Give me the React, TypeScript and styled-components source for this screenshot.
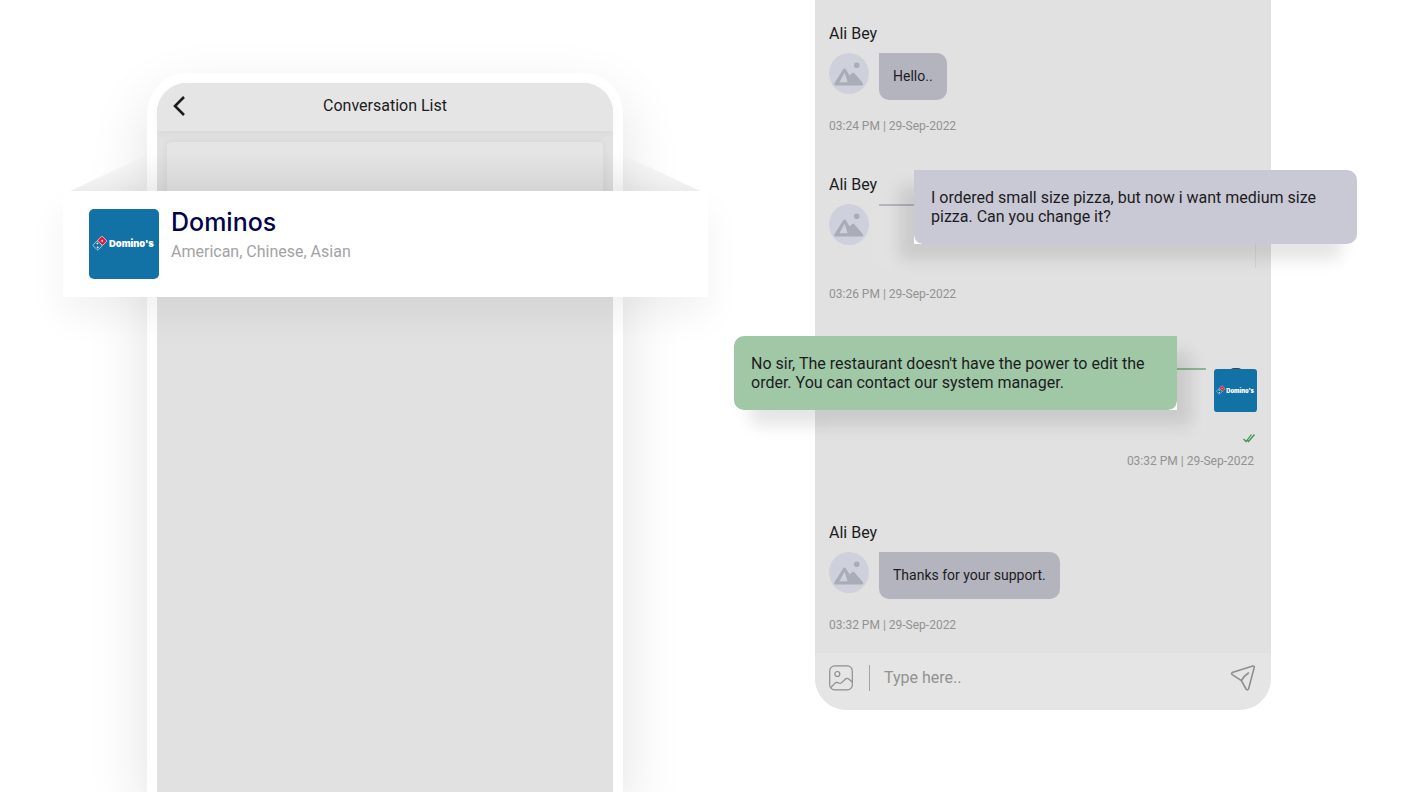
import React from "react";
import styled, { createGlobalStyle } from "styled-components";

const GlobalStyle = createGlobalStyle`
  *, *::before, *::after { box-sizing: border-box; }
  body {
    margin: 0;
    background: #fff;
    color: #1c1c1e;
    font-family: Roboto, "Liberation Sans", sans-serif;
    overflow-x: hidden;
  }
  button { padding: 0; border: 0; background: none; color: inherit; cursor: pointer; display: flex; }
  h1, h2, p { margin: 0; font-weight: 400; }
`;

const Page = styled.main`
  display: grid;
  grid-template-columns: 476fr 456fr;
  column-gap: 192px;
  min-height: 100vh;
  padding: 0 137px 0 147px;
  overflow: hidden;
`;

const PhoneFrame = styled.section`
  position: relative;
  display: flex;
  flex-direction: column;
  margin-top: 73px;
  padding: 10px 10px 0;
  background: #fff;
  border-radius: 40px 40px 0 0;
  box-shadow: 0 24px 60px rgba(0, 0, 0, 0.12);
`;

const Screen = styled.div`
  flex: 1;
  background: #e1e1e1;
  border-radius: 30px 30px 0 0;
`;

const ScreenHeader = styled.header`
  display: grid;
  grid-template-columns: 32px 1fr 32px;
  align-items: center;
  height: 48px;
  padding: 0 12px 2px;
  background: #e5e5e5;
  border-radius: 30px 30px 0 0;
  box-shadow: 0 2px 8px rgba(0, 0, 0, 0.04);
`;

const ScreenTitle = styled.h1`
  font-size: 16px;
  line-height: 20px;
  text-align: center;
`;

const List = styled.div`
  padding: 11px 10px;
`;

const ListSlot = styled.div`
  position: relative;
  height: 136px;
  background: #e5e5e5;
  border-radius: 4px;
  box-shadow: 0 0 8px rgba(0, 0, 0, 0.06);
`;

const LiftShade = styled.div`
  position: absolute;
  top: 0;
  left: -97px;
  right: -97px;
  height: 49px;
  background: linear-gradient(rgba(0, 0, 0, 0) 20%, rgba(0, 0, 0, 0.07));
  clip-path: polygon(0 100%, 104px 0, calc(100% - 104px) 0, 100% 100%);
`;

const RestaurantCard = styled.article`
  position: absolute;
  top: 49px;
  left: -104px;
  right: -105px;
  display: flex;
  gap: 12px;
  padding: 18px 26px;
  background: #fff;
  box-shadow: 0 20px 36px rgba(0, 0, 0, 0.055);
`;

const RestaurantName = styled.h2`
  color: #03034a;
  font-family: Inter, sans-serif;
  font-size: 25px;
  font-weight: 500;
  line-height: 26px;
`;

const RestaurantTags = styled.p`
  margin-top: 7px;
  color: #a3a3a3;
  font-size: 16px;
  line-height: 20px;
`;

const LogoTile = styled.svg<{ $size: number }>`
  display: block;
  flex: none;
  width: ${(p) => p.$size}px;
  height: ${(p) => p.$size}px;
`;

const ChatPhone = styled.section`
  align-self: start;
  background: #e1e1e1;
  border-radius: 0 0 32px 32px;
`;

const Thread = styled.div`
  padding: 24px 15px 20px 14px;
`;

const Message = styled.article<{ $before?: number; $mine?: boolean }>`
  display: flex;
  flex-direction: column;
  align-items: ${(p) => (p.$mine ? "flex-end" : "stretch")};
  margin-top: ${(p) => p.$before ?? 0}px;
`;

const Sender = styled.p`
  margin-bottom: 9px;
  font-size: 16px;
  line-height: 20px;
`;

const MessageRow = styled.div`
  display: flex;
  align-self: stretch;
  align-items: flex-start;
  gap: 10px;
`;

const Bubble = styled.p`
  padding: 15px 14px;
  background: #b4b4bf;
  border-radius: 0 10px 10px 10px;
  font-size: 14px;
  line-height: 17px;
`;

const LiftedSlot = styled.div<{ $mine?: boolean }>`
  position: relative;
  flex: 1;
  height: 64px;
  border-top: 2px solid ${(p) => (p.$mine ? "#8fb598" : "#b4b4c2")};
  border-right: ${(p) => (p.$mine ? "0" : "1px solid #d4d4d4")};
  background: #e2e2e2;
`;

const LiftedBubble = styled.p<{ $mine?: boolean }>`
  --tone: ${(p) => (p.$mine ? "#a0c7a6" : "#c9c8d5")};
  position: absolute;
  top: ${(p) => (p.$mine ? "-34px" : "-36px")};
  left: ${(p) => (p.$mine ? "-95px" : "35px")};
  right: ${(p) => (p.$mine ? "29px" : "-102px")};
  padding: 18px 17px;
  background:
    radial-gradient(circle at ${(p) => (p.$mine ? "top left" : "top right")}, var(--tone) 7px, #fff 8px)
      ${(p) => (p.$mine ? "right bottom" : "left bottom")} / 8px 8px no-repeat,
    var(--tone);
  border-radius: ${(p) => (p.$mine ? "10px 0 0 10px" : "0 10px 10px 0")};
  box-shadow: ${(p) => (p.$mine ? "15px" : "-15px")} 16px 16px rgba(0, 0, 0, 0.1);
  font-size: 16px;
  line-height: 19px;
`;

const Stamp = styled.time<{ $mine?: boolean }>`
  margin: ${(p) => (p.$mine ? "10px 2px 0 0" : "18px 0 0")};
  color: #929292;
  font-size: 12px;
  line-height: 16px;
`;

const ReadTicks = styled.svg`
  display: block;
  margin: 1px 1px 0 0;
`;

const AvatarSvg = styled.svg`
  display: block;
  flex: none;
`;

const StoreAvatar = styled.div`
  position: relative;
  margin: 1px -1px 0 -2px;
  &::before {
    content: "";
    position: absolute;
    top: -1px;
    left: 16px;
    width: 12px;
    height: 4px;
    border-radius: 6px 6px 0 0;
    background: #444;
  }
  svg { position: relative; }
`;

const Composer = styled.form`
  display: flex;
  align-items: center;
  height: 57px;
  padding: 0 15px 8px 14px;
  background: #e5e5e5;
  border-radius: 0 0 32px 32px;
  color: #8e8e8e;
`;

const Divider = styled.span`
  width: 1px;
  height: 26px;
  margin: 0 14px 0 16px;
  background: #a5a5a5;
`;

const ComposerInput = styled.input`
  flex: 1;
  min-width: 0;
  padding: 0;
  border: 0;
  outline: 0;
  background: none;
  color: #1c1c1e;
  font: 16px/20px Roboto, "Liberation Sans", sans-serif;
  &::placeholder { color: #929292; opacity: 1; }
`;

function StoreLogo({ size }: { size: number }) {
  return (
    <LogoTile $size={size} viewBox="0 0 70 70" role="img" aria-label="Domino's">
      <rect width="70" height="70" rx="5" fill="#1271a5" />
      <g transform="translate(12 33) rotate(45)">
        <rect x="-3.6" y="-5" width="7.2" height="6.6" rx="1" fill="#e31b3c" stroke="#f0dfe8" strokeWidth="0.7" />
        <rect x="-3.6" y="1.6" width="7.2" height="6.6" rx="1" fill="#1271a5" stroke="#d6e8f2" strokeWidth="0.7" />
        <circle cx="0" cy="-1.7" r="0.9" fill="#fff" />
        <circle cx="-1.5" cy="3.6" r="0.9" fill="#fff" />
        <circle cx="1.5" cy="6.2" r="0.9" fill="#fff" />
      </g>
      <text x="20" y="38.4" fill="#fff" fontFamily="Inter, sans-serif" fontSize="9.4" fontWeight="900">
        Domino's
      </text>
    </LogoTile>
  );
}

function Avatar() {
  return (
    <AvatarSvg width="40" height="41" viewBox="0 0 40 41" aria-hidden="true">
      <ellipse cx="20" cy="20.5" rx="20" ry="20.5" fill="#ced1db" />
      <path
        fill="#a9adb8"
        fillRule="evenodd"
        d="M6.4 32.5Q4.4 32 5.6 30L14 16.6Q15.5 14.6 17 16.6L20.6 22.4L22.6 20.4Q24.4 18.8 26 21L33.8 30Q35 32.2 32.8 32.5ZM10.4 29.3H18.6L15.6 19.8Z"
      />
      <circle cx="27.7" cy="12.3" r="2.8" fill="#a9adb8" />
    </AvatarSvg>
  );
}

function Incoming({ text, time, before }: { text: string; time: string; before?: number }) {
  return (
    <Message $before={before}>
      <Sender>Ali Bey</Sender>
      <MessageRow>
        <Avatar />
        <Bubble>{text}</Bubble>
      </MessageRow>
      <Stamp>{time}</Stamp>
    </Message>
  );
}

export default function App() {
  return (
    <>
      <GlobalStyle />
      <Page>
        <PhoneFrame>
          <Screen>
            <ScreenHeader>
              <button type="button" aria-label="Back">
                <svg width="20" height="22" viewBox="0 0 20 22" fill="none" stroke="#1c1c1e" strokeWidth="2.6">
                  <path d="M15 2L6 11L15 20" />
                </svg>
              </button>
              <ScreenTitle>Conversation List</ScreenTitle>
            </ScreenHeader>
            <List>
              <ListSlot>
                <LiftShade />
                <RestaurantCard>
                  <StoreLogo size={70} />
                  <div>
                    <RestaurantName>Dominos</RestaurantName>
                    <RestaurantTags>American, Chinese, Asian</RestaurantTags>
                  </div>
                </RestaurantCard>
              </ListSlot>
            </List>
          </Screen>
        </PhoneFrame>

        <ChatPhone>
          <Thread>
            <Incoming text="Hello.." time="03:24 PM | 29-Sep-2022" />
            <Message $before={41}>
              <Sender>Ali Bey</Sender>
              <MessageRow>
                <Avatar />
                <LiftedSlot>
                  <LiftedBubble>
                    I ordered small size pizza, but now i want medium size pizza. Can you change it?
                  </LiftedBubble>
                </LiftedSlot>
              </MessageRow>
              <Stamp>03:26 PM | 29-Sep-2022</Stamp>
            </Message>
            <Message $before={66} $mine>
              <MessageRow>
                <LiftedSlot $mine>
                  <LiftedBubble $mine>
                    No sir, The restaurant doesn't have the power to edit the order. You can contact our system
                    manager.
                  </LiftedBubble>
                </LiftedSlot>
                <StoreAvatar>
                  <StoreLogo size={43} />
                </StoreAvatar>
              </MessageRow>
              <ReadTicks width="12" height="10" viewBox="0 0 12 10" fill="none" stroke="#3f8f4c" strokeWidth="1.2">
                <path d="M0.5 6L3 8.5L8.5 1.5M4.5 7.5L5.5 8.5L11.5 1.5" />
              </ReadTicks>
              <Stamp $mine>03:32 PM | 29-Sep-2022</Stamp>
            </Message>
            <Incoming before={54} text="Thanks for your support." time="03:32 PM | 29-Sep-2022" />
          </Thread>
          <Composer onSubmit={(e) => e.preventDefault()}>
            <button type="button" aria-label="Attach image">
              <svg width="24" height="26" viewBox="0 0 24 26" fill="none" stroke="currentColor" strokeWidth="1.2">
                <rect x="0.7" y="0.9" width="22.6" height="24" rx="5" />
                <circle cx="8.3" cy="9" r="2.5" />
                <path d="M1.8 22.5L6 18.2Q7.8 16.6 9.8 18Q11.6 18.8 13 17.4L16.4 14Q18 12.6 19.8 14L23.2 17" />
              </svg>
            </button>
            <Divider />
            <ComposerInput aria-label="Message" placeholder="Type here.." />
            <button type="submit" aria-label="Send">
              <svg
                width="26"
                height="26"
                viewBox="0 0 26 26"
                fill="none"
                stroke="currentColor"
                strokeWidth="1.6"
                strokeLinejoin="round"
                strokeLinecap="round"
              >
                <path d="M2.2 7.6L22.8 1Q24.6 0.8 24.2 2.6L18.6 23.8Q17.4 25.8 16 24L11.4 15.6L2.2 9.6Q1 8.4 2.2 7.6ZM11.4 15.6Q13.4 11.4 18.4 8" />
              </svg>
            </button>
          </Composer>
        </ChatPhone>
      </Page>
    </>
  );
}
